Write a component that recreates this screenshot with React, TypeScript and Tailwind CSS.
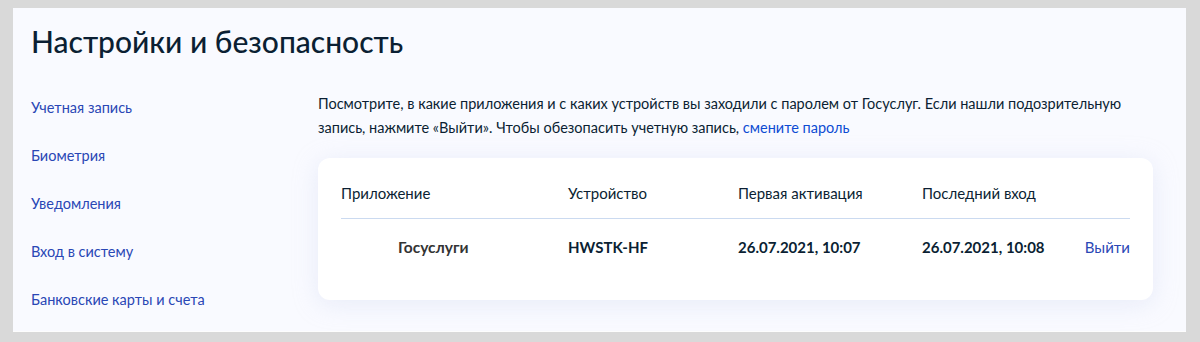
const menu = [
  "Учетная запись",
  "Биометрия",
  "Уведомления",
  "Вход в систему",
  "Банковские карты и счета",
];

const columns = [
  { name: "Приложение", className: "w-[227px]" },
  { name: "Устройство", className: "w-[170px]" },
  { name: "Первая активация", className: "w-[184px]" },
  { name: "Последний вход", className: "flex-1" },
];

export default function App() {
  return (
    <div
      className="w-[1200px] h-[342px] bg-[#d9d9d9] pt-[8px] pl-[13px]"
      style={{ fontFamily: "Lato, 'Noto Sans', sans-serif" }}
    >
      <div className="w-[1173px] h-[324px] bg-[#f9faff] border-b border-[#fdfdfd] pl-[18px] pr-[33px]">
        <h1 className="pt-[11px] text-[30px] leading-[44px] font-medium text-[#0b1f33]">
          Настройки и безопасность
        </h1>

        <div className="flex mt-[29px]">
          <nav className="w-[287px] flex flex-col gap-[24px] pt-[4px]">
            {menu.map((item, idx) => (
              <a key={idx} href="#" className="text-[14.5px] leading-[24px] text-[#2a47b5]">
                {item}
              </a>
            ))}
          </nav>

          <div className="flex-1">
            <p className="text-[14.5px] leading-[24px] text-[#0b1f33]">
              Посмотрите, в какие приложения и с каких устройств вы заходили с паролем от Госуслуг. Если нашли подозрительную
              запись, нажмите «Выйти». Чтобы обезопасить учетную запись,{" "}
              <a href="#" className="text-[#0d4cd3]">смените пароль</a>
            </p>

            <div className="mt-[18px] bg-white rounded-[12px] shadow-[0_4px_24px_rgba(200,210,235,0.35)] px-[23px] pt-[23px] h-[142px]">
              <div className="flex text-[15px] leading-[24px] text-[#0b1f33] pb-[13px] border-b border-[#cbdaf0]">
                {columns.map((column, idx) => (
                  <div key={idx} className={column.className}>{column.name}</div>
                ))}
              </div>
              <div className="flex items-center text-[15px] leading-[24px] font-bold text-[#0b1f33] pt-[16px]">
                <div className="w-[227px] pl-[57px] text-[15.5px] text-[#333333]">Госуслуги</div>
                <div className="w-[170px]">HWSTK-HF</div>
                <div className="w-[184px]">26.07.2021, 10:07</div>
                <div className="flex-1">26.07.2021, 10:08</div>
                <a href="#" className="font-normal text-[#2a47b5]">Выйти</a>
              </div>
            </div>
          </div>
        </div>
      </div>
    </div>
  );
}
